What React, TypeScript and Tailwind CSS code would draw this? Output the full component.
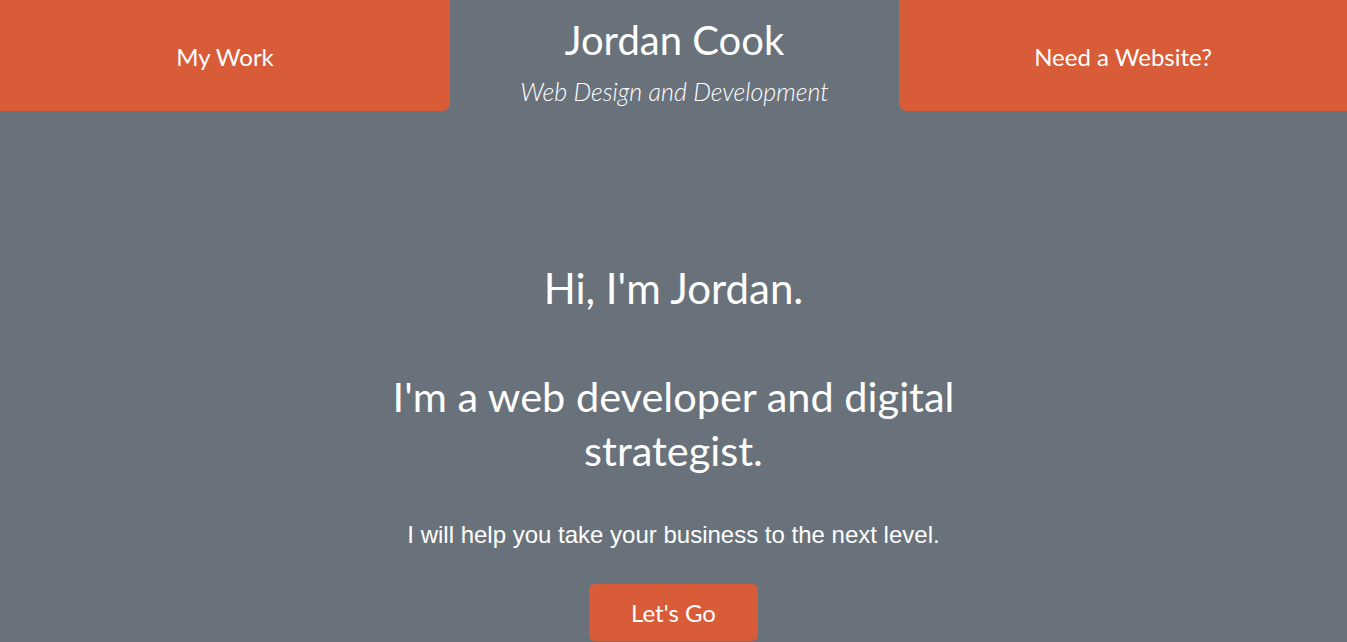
export default function App() {
  return (
    <div className="min-h-screen bg-[#69727b] text-white font-['Lato',sans-serif]">
      <header className="grid grid-cols-[450px_1fr_448px] h-[111px]">
        <a className="flex items-center justify-center bg-[#d95c38] rounded-br-lg text-[24px] pt-0.5">
          My Work
        </a>
        <div className="flex flex-col items-center">
          <h1 className="text-[40px] leading-none mt-[20px]">Jordan Cook</h1>
          <p className="text-[25px] leading-[30px] italic font-light mt-[16px]">Web Design and Development</p>
        </div>
        <a className="flex items-center justify-center bg-[#d95c38] rounded-bl-lg text-[24px] pt-0.5">
          Need a Website?
        </a>
      </header>
      <main className="flex flex-col items-center text-center">
        <h2 className="text-[42px] leading-[54px] mt-[150px]">Hi, I'm Jordan.</h2>
        <h2 className="text-[41.5px] leading-[54px] mt-[54px] max-w-[600px]">
          I'm a web developer and digital strategist.
        </h2>
        <p className="font-['Liberation_Sans',Arial,sans-serif] text-[24px] leading-[27px] mt-[44px]">
          I will help you take your business to the next level.
        </p>
        <button className="mt-[36px] w-[169px] h-[57px] bg-[#d95c38] rounded-md text-[24px]">
          Let's Go
        </button>
      </main>
    </div>
  );
}
